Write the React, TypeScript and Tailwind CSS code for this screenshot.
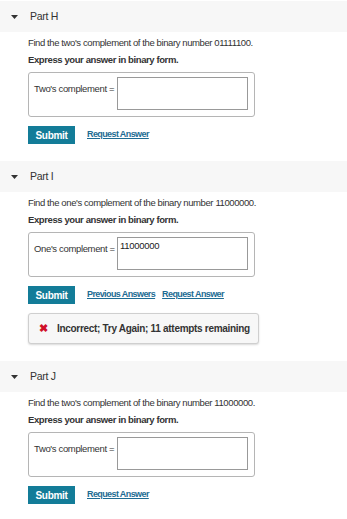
const font = { fontFamily: '"Liberation Sans", Arial, sans-serif' };

function Header({ title }: { title: string }) {
  return (
    <div className="flex h-[31px] items-center bg-[#f7f7f7]">
      <svg width="7" height="4" viewBox="0 0 7 4" className="ml-[11px] mr-[12px]">
        <polygon points="0,0 7,0 3.5,4" fill="#333" />
      </svg>
      <span className="text-[10.5px] tracking-[-0.3px] text-[#333]">{title}</span>
    </div>
  );
}

function AnswerBox({ label, value }: { label: string; value?: string }) {
  return (
    <div className="flex h-[45px] w-[227px] items-start rounded-[3px] border border-[#b5b5b5] pl-[5px] pr-[6px] pt-[4px]">
      <span className="mt-[6px] w-[83px] shrink-0 whitespace-nowrap text-[9.5px] leading-[12px] tracking-[-0.35px] text-[#333]">
        {label}
      </span>
      <div className="h-[33px] flex-1 border border-[#999] px-[2px] pt-[2px] text-[9.5px] leading-[12px] tracking-[-0.3px] text-[#222]">
        {value}
      </div>
    </div>
  );
}

function Actions({ previous }: { previous?: boolean }) {
  return (
    <div className="mt-[9px] flex items-center">
      <button className="h-[18px] w-[47px] bg-[#137c98] text-[10px] font-bold tracking-[-0.3px] text-white">Submit</button>
      <div className="ml-[12px] flex gap-[7px] whitespace-nowrap text-[9px] font-bold tracking-[-0.6px] text-[#1d6c93] underline">
        {previous && <span>Previous Answers</span>}
        <span>Request Answer</span>
      </div>
    </div>
  );
}

function Part({
  title,
  question,
  label,
  value,
  previous,
  feedback,
}: {
  title: string;
  question: string;
  label: string;
  value?: string;
  previous?: boolean;
  feedback?: boolean;
}) {
  return (
    <section className="pb-[17px]">
      <Header title={title} />
      <div className="pl-[28px] pt-[5px]">
        <p className="whitespace-nowrap text-[9.5px] leading-[12px] tracking-[-0.4px] text-[#333]">{question}</p>
        <p className="mt-[5px] whitespace-nowrap text-[9.5px] font-bold leading-[12px] tracking-[-0.4px] text-[#333]">
          Express your answer in binary form.
        </p>
        <div className="mt-[6px]">
          <AnswerBox label={label} value={value} />
        </div>
        <Actions previous={previous} />
        {feedback && (
          <div className="mt-[9px] flex h-[31px] w-[231px] items-center rounded-[3px] border border-[#cfcfcf] bg-[#f7f7f7] pl-[10px] shadow-[0_1px_2px_rgba(0,0,0,0.15)]">
            <span className="text-[11px] font-bold text-[#d0102a]">✖</span>
            <span className="ml-[9px] whitespace-nowrap text-[10px] font-bold tracking-[-0.3px] text-[#333]">
              Incorrect; Try Again; 11 attempts remaining
            </span>
          </div>
        )}
      </div>
    </section>
  );
}

export default function App() {
  return (
    <div className="h-[519px] w-[347px] bg-white pt-[1px]" style={font}>
      <Part title="Part H" question="Find the two's complement of the binary number 01111100." label="Two's complement =" />
      <Part
        title="Part I"
        question="Find the one's complement of the binary number 11000000."
        label="One's complement ="
        value="11000000"
        previous
        feedback
      />
      <Part title="Part J" question="Find the two's complement of the binary number 11000000." label="Two's complement =" />
    </div>
  );
}
